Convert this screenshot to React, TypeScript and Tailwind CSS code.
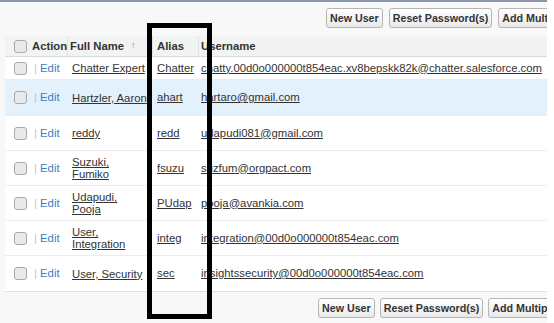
const users = [
  { name: ["Chatter Expert"], alias: "Chatter", username: "chatty.00d0o000000t854eac.xv8bepskk82k@chatter.salesforce.com", h: "h-[23px]" },
  { name: ["Hartzler, Aaron"], alias: "ahart", username: "hartaro@gmail.com", h: "h-[36px]", active: true },
  { name: ["reddy"], alias: "redd", username: "udapudi081@gmail.com", h: "h-[35px]" },
  { name: ["Suzuki,", "Fumiko"], alias: "fsuzu", username: "suzfum@orgpact.com", h: "h-[35px]" },
  { name: ["Udapudi,", "Pooja"], alias: "PUdap", username: "pooja@avankia.com", h: "h-[35px]" },
  { name: ["User,", "Integration"], alias: "integ", username: "integration@00d0o000000t854eac.com", h: "h-[35px]" },
  { name: ["User, Security"], alias: "sec", username: "insightssecurity@00d0o000000t854eac.com", h: "h-[35px]" },
];

function Checkbox() {
  return <span className="block w-[13px] h-[13px] rounded-[3px] border border-[#a9a9a9] bg-[#e9e9e9]" />;
}

function Btn({ label }: { label: string }) {
  return (
    <button className="h-[20px] px-[3px] rounded-[3px] border border-[#b5b5b5] bg-gradient-to-b from-white to-[#e9e9e9] text-[#333] text-[10.7px] font-bold whitespace-nowrap leading-none">
      {label}
    </button>
  );
}

export default function App() {
  return (
    <div className="relative w-[554px] h-[323px] bg-white overflow-hidden font-['Liberation_Sans',Arial,sans-serif] text-[11.3px] text-[#333]">
      <div className="w-[547px] h-full bg-[#f8f8f8] border-t-2 border-[#8995ab] overflow-hidden">
        {/* top buttons */}
        <div className="flex gap-[6px] pl-[326px] pt-[6px] h-[34px]">
          <Btn label="New User" />
          <Btn label="Reset Password(s)" />
          <Btn label="Add Multiple Users" />
        </div>

        {/* table */}
        <div className="ml-[5px] bg-white border-b border-[#e0e0e0]">
          <div className="flex h-[21px] items-center bg-[#f2f3f3] border-b border-[#d9dcde] font-bold">
            <div className="w-[25px] pl-[9px]"><Checkbox /></div>
            <div className="w-[38px] pl-[2px] h-full flex items-center border-r border-[#e1e4e6]">Action</div>
            <div className="w-[85px] pl-[2px] h-full flex items-center border-r border-[#e1e4e6]">
              Full Name <span className="ml-[7px] text-[9px] text-[#888] font-normal">↑</span>
            </div>
            <div className="w-[46px] pl-[4px] h-full flex items-center border-r border-[#e1e4e6]">Alias</div>
            <div className="pl-[2px]">Username</div>
          </div>
          {users.map((u, i) => (
            <div
              key={i}
              className={`flex items-center ${u.h} ${i < users.length - 1 ? "border-b border-[#ececec]" : ""} ${u.active ? "bg-[#e3f1fd]" : ""}`}
            >
              <div className="w-[25px] pl-[9px]"><Checkbox /></div>
              <div className="w-[38px] pl-[4px] whitespace-nowrap">
                <span className="text-[#c4c4c4]">|</span> <span className="text-[#3a7fc2]">Edit</span>
              </div>
              <div className="w-[85px] pl-[4px] leading-[12px] whitespace-nowrap overflow-hidden">
                {u.name.map((n, j) => (
                  <div key={j} className="underline">{n}</div>
                ))}
              </div>
              <div className="w-[46px] pl-[4px] underline whitespace-nowrap overflow-hidden">{u.alias}</div>
              <div className="pl-[2px] underline whitespace-nowrap">{u.username}</div>
            </div>
          ))}
        </div>

        {/* bottom buttons */}
        <div className="flex gap-[5px] pl-[318px] pt-[6px]">
          <Btn label="New User" />
          <Btn label="Reset Password(s)" />
          <Btn label="Add Multiple Users" />
        </div>
      </div>

      {/* annotation box */}
      <div className="absolute left-[147px] top-[23px] w-[65px] h-[296px] border-[5px] border-black" />
    </div>
  );
}
